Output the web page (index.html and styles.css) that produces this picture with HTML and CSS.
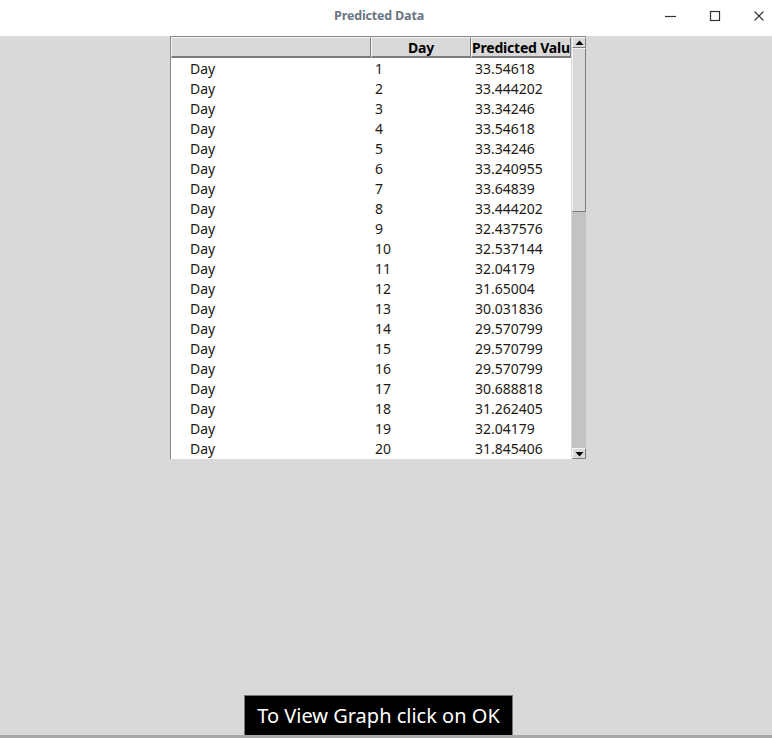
FILE: index.html
```html
<!DOCTYPE html>
<html>
<head>
<meta charset="utf-8">
<link rel="stylesheet" href="styles.css">
</head>
<body>
<div class="window">
  <div class="titlebar">
    <div class="title">Predicted Data</div>
    <div class="controls">
      <svg class="ctl" width="14" height="14" viewBox="0 0 14 14"><line x1="1" y1="7.5" x2="12" y2="7.5" stroke="#333" stroke-width="1.2"/></svg>
      <svg class="ctl" width="14" height="14" viewBox="0 0 14 14"><rect x="2.5" y="2.5" width="9" height="9" fill="none" stroke="#333" stroke-width="1.2"/></svg>
      <svg class="ctl" width="14" height="14" viewBox="0 0 14 14"><path d="M2.5 2.5 L11.5 11.5 M11.5 2.5 L2.5 11.5" stroke="#333" stroke-width="1.1"/></svg>
    </div>
  </div>
  <div class="content">
    <div class="tablewrap">
      <div class="table">
        <div class="head">
          <div class="hc c1"></div>
          <div class="hc c2 center">Day</div>
          <div class="hc c3">Predicted Value</div>
        </div>
        <div class="body">
          <div class="row"><span class="c1">Day</span><span class="c2">1</span><span class="c3">33.54618</span></div>
          <div class="row"><span class="c1">Day</span><span class="c2">2</span><span class="c3">33.444202</span></div>
          <div class="row"><span class="c1">Day</span><span class="c2">3</span><span class="c3">33.34246</span></div>
          <div class="row"><span class="c1">Day</span><span class="c2">4</span><span class="c3">33.54618</span></div>
          <div class="row"><span class="c1">Day</span><span class="c2">5</span><span class="c3">33.34246</span></div>
          <div class="row"><span class="c1">Day</span><span class="c2">6</span><span class="c3">33.240955</span></div>
          <div class="row"><span class="c1">Day</span><span class="c2">7</span><span class="c3">33.64839</span></div>
          <div class="row"><span class="c1">Day</span><span class="c2">8</span><span class="c3">33.444202</span></div>
          <div class="row"><span class="c1">Day</span><span class="c2">9</span><span class="c3">32.437576</span></div>
          <div class="row"><span class="c1">Day</span><span class="c2">10</span><span class="c3">32.537144</span></div>
          <div class="row"><span class="c1">Day</span><span class="c2">11</span><span class="c3">32.04179</span></div>
          <div class="row"><span class="c1">Day</span><span class="c2">12</span><span class="c3">31.65004</span></div>
          <div class="row"><span class="c1">Day</span><span class="c2">13</span><span class="c3">30.031836</span></div>
          <div class="row"><span class="c1">Day</span><span class="c2">14</span><span class="c3">29.570799</span></div>
          <div class="row"><span class="c1">Day</span><span class="c2">15</span><span class="c3">29.570799</span></div>
          <div class="row"><span class="c1">Day</span><span class="c2">16</span><span class="c3">29.570799</span></div>
          <div class="row"><span class="c1">Day</span><span class="c2">17</span><span class="c3">30.688818</span></div>
          <div class="row"><span class="c1">Day</span><span class="c2">18</span><span class="c3">31.262405</span></div>
          <div class="row"><span class="c1">Day</span><span class="c2">19</span><span class="c3">32.04179</span></div>
          <div class="row"><span class="c1">Day</span><span class="c2">20</span><span class="c3">31.845406</span></div>
        </div>
      </div>
      <div class="scrollbar">
        <div class="arrow"><svg width="9" height="6" viewBox="0 0 9 6"><path d="M4.5 0.5 L8.5 5 L0.5 5 Z" fill="#000"/></svg></div>
        <div class="slider"></div>
        <div class="trough"></div>
        <div class="arrow"><svg width="9" height="6" viewBox="0 0 9 6"><path d="M0.5 1 L8.5 1 L4.5 5.5 Z" fill="#000"/></svg></div>
      </div>
    </div>
    <div class="spacer"></div>
    <div class="btn">To View Graph click on OK</div>
  </div>
</div>
</body>
</html>
```
FILE: styles.css
```css
html, body {
  margin: 0;
  padding: 0;
  width: 772px;
  height: 738px;
  overflow: hidden;
  background: #d9d9d9;
  font-family: "Noto Sans", "DejaVu Sans", sans-serif;
}
.window {
  display: flex;
  flex-direction: column;
  height: 738px;
}
.titlebar {
  height: 36px;
  background: #ffffff;
  display: flex;
  align-items: center;
  justify-content: center;
  position: relative;
  flex: none;
}
.title {
  font-family: "Open Sans", "Noto Sans", sans-serif;
  font-weight: 700;
  font-size: 12.5px;
  color: #6b7484;
  letter-spacing: -0.2px;
  margin-left: -14px;
  margin-top: -5px;
}
.controls {
  position: absolute;
  right: 6px;
  top: 9px;
  display: flex;
  gap: 30px;
}
.ctl { display: block; }
.content {
  flex: 1;
  display: flex;
  flex-direction: column;
  border-bottom: 3px solid #a9a9a9;
  box-sizing: border-box;
}
.tablewrap {
  margin-left: 170px;
  width: 416px;
  height: 423px;
  display: flex;
  border-left: 1px solid #8a8a8a;
  border-top: 1px solid #8a8a8a;
  box-sizing: border-box;
  background: #ffffff;
}
.table {
  width: 400px;
  display: flex;
  flex-direction: column;
}
.head {
  display: flex;
  height: 21px;
  flex: none;
}
.hc {
  box-sizing: border-box;
  background: #d9d9d9;
  border-top: 1px solid #f4f4f4;
  border-left: 1px solid #f4f4f4;
  border-right: 1px solid #7d7d7d;
  border-bottom: 2px solid #7d7d7d;
  font-weight: 700;
  font-size: 14px;
  line-height: 19px;
  color: #000;
  white-space: nowrap;
  overflow: hidden;
  padding-left: 0;
  letter-spacing: -0.2px;
}
.head .c1 { width: 200px; }
.head .c2 { width: 100px; text-align: center; padding-left: 0; }
.head .c3 { width: 100px; }
.body {
  flex: 1;
  display: flex;
  flex-direction: column;
}
.row {
  display: flex;
  height: 20px;
  font-size: 14px;
  line-height: 22px;
  color: #1d1a14;
}
.row .c1 { width: 200px; padding-left: 19px; box-sizing: border-box; }
.row .c2 { width: 100px; padding-left: 4px; box-sizing: border-box; }
.row .c3 { width: 100px; padding-left: 4px; box-sizing: border-box; }
.scrollbar {
  width: 15px;
  display: flex;
  flex-direction: column;
  background: #c3c3c3;
  border-left: 1px solid #d9d9d9;
  box-sizing: border-box;
}
.arrow {
  height: 11px;
  background: #d9d9d9;
  box-sizing: border-box;
  border-top: 1px solid #f4f4f4;
  border-left: 1px solid #f4f4f4;
  border-right: 1px solid #7d7d7d;
  border-bottom: 1px solid #7d7d7d;
  display: flex;
  align-items: center;
  justify-content: center;
  flex: none;
}
.slider {
  height: 164px;
  background: #d9d9d9;
  box-sizing: border-box;
  border-top: 1px solid #f4f4f4;
  border-left: 1px solid #f4f4f4;
  border-right: 1px solid #7d7d7d;
  border-bottom: 1px solid #7d7d7d;
  flex: none;
}
.trough { flex: 1; }
.spacer { flex: 1; }
.btn {
  margin-left: 244px;
  width: 269px;
  height: 40px;
  box-sizing: border-box;
  background: #000;
  border: 1px solid #777;
  border-bottom: none;
  color: #fff;
  font-size: 20px;
  line-height: 40px;
  text-align: center;
}
```
